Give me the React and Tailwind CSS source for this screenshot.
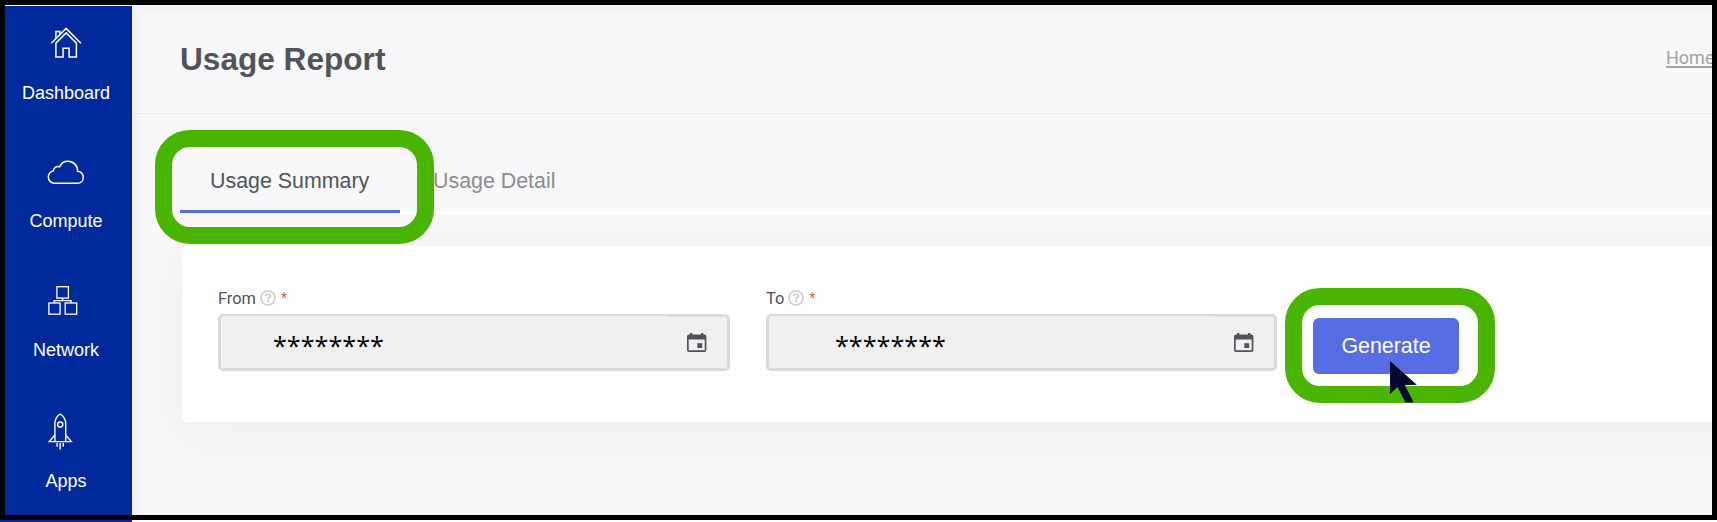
const sans = "font-['Liberation_Sans',Arial,sans-serif]";

function HouseIcon() {
  return (
    <svg width="32" height="32" viewBox="0 0 32 32" fill="none" stroke="white" strokeWidth="1.5">
      <path d="M1.3 16.2 16.1 1.4 30.9 16.2" />
      <path d="M5.9 30.1V16.1L16.1 5.9 26.4 16.1V30.1H19.1V21.2H13.1V30.1Z" />
      <path d="M5.9 11.5V4.4H9.9V7.3" />
    </svg>
  );
}

function CloudIcon() {
  return (
    <svg width="38" height="25" viewBox="0 0 38 25" fill="none" stroke="white" strokeWidth="1.5">
      <path d="M7.6 23.2H30.6C34 23.2 36.3 20.6 36.3 17.4C36.3 13.8 33.6 11.4 30.6 11.3C30.9 5.6 26.4 1.2 21 1.2C16.9 1.2 14 3.6 12.7 6.7C9 5.6 6.6 8 6.4 10.9C3.2 11.9 1.3 14.2 1.3 17C1.3 20.4 4 23.2 7.6 23.2Z" />
    </svg>
  );
}

function NetworkIcon() {
  return (
    <svg width="30" height="30" viewBox="0 0 30 30" fill="none" stroke="white" strokeWidth="1.3">
      <rect x="8.9" y="0.7" width="11.5" height="11.4" />
      <rect x="0.9" y="17" width="11.2" height="11.2" />
      <rect x="17.2" y="17" width="11.5" height="11.2" />
      <path d="M14.6 12.1V14.6M6.1 17V14.6H23.1V17" />
    </svg>
  );
}

function RocketIcon() {
  return (
    <svg width="25" height="38" viewBox="0 0 25 38" fill="none" stroke="white" strokeWidth="1.4">
      <path d="M6.9 28.6V10.5C6.9 6.5 9.2 3 12.2 1C15.2 3 17.7 6.5 17.7 10.5V28.6" />
      <path d="M6.9 22 1.3 28.6H23.3L17.7 22" />
      <circle cx="12.2" cy="11.6" r="2.6" />
      <path d="M9.1 30V33.8M12.2 30V36.6M15.3 30V33.8" />
    </svg>
  );
}

function CalendarIcon() {
  return (
    <svg width="20" height="19" viewBox="0 0 20 19" fill="#505459">
      <path fillRule="evenodd" d="M3 0H5.4V1.5H14V0H16.4V1.5H17.4Q19.4 1.5 19.4 3.5V17Q19.4 19 17.4 19H2Q0 19 0 17V3.5Q0 1.5 2 1.5H3ZM1.7 6.4V17.3H17.7V6.4Z" />
      <path d="M10.3 10.2H15.2V15H10.3Z" />
    </svg>
  );
}

function HelpIcon() {
  return (
    <svg width="16" height="16" viewBox="0 0 16 16" fill="none" stroke="#d2d2d2">
      <circle cx="8" cy="8" r="7.1" strokeWidth="1.8" />
      <path d="M5.6 6.4C5.7 4.8 6.8 4.2 8 4.2C9.4 4.2 10.4 5 10.4 6.1C10.4 7.6 8.1 7.6 8.1 9.2" strokeWidth="2.1" />
      <path d="M8.1 10.4V12.6" strokeWidth="2.3" />
    </svg>
  );
}

function NavItem({ icon, label, className }) {
  return (
    <div className={"flex flex-col items-center pr-[5px] " + className}>
      {icon}
      <span className="text-[18px] leading-[20px] text-white">{label}</span>
    </div>
  );
}

function DateField({ label, className, valueClass }) {
  return (
    <div className={className}>
      <div className="flex h-[20px] items-center font-[Roboto,sans-serif] text-[16.4px] leading-[20px] text-[#505459]">
        <span className="pt-[1px]">{label}</span>
        <span className="ml-[4px]"><HelpIcon /></span>
        <span className="ml-[5px] pb-[1px] text-[14px] text-[#e2564f]">*</span>
      </div>
      <div className="relative mt-[6px] flex h-[57px] items-center justify-between rounded-[5px] border-[3px] border-t-2 border-[#d9d9d9] bg-[#f0f0f0] pr-[20px]">
        <span className="absolute -top-px right-0 h-[2px] w-[59px] bg-[#dadada]" />
        <span className={"pt-[5px] font-['Open_Sans',sans-serif] text-[25.2px] leading-[34px] text-black " + valueClass}>********</span>
        <CalendarIcon />
      </div>
    </div>
  );
}

export default function App() {
  return (
    <div className={"relative h-[522px] w-[1717px] overflow-hidden bg-[linear-gradient(90deg,#002a9c_132px,#fcfcfd_132px)] " + sans}>
      <div className="flex h-[520px] border-[5px] border-black bg-[#f8f8fa]">
        <aside className="w-[127px] shrink-0 border-t border-white bg-[#002a9c]">
          <NavItem className="pt-[21px] [&>span]:mt-[24px]" icon={<HouseIcon />} label="Dashboard" />
          <NavItem className="pt-[57px] [&>span]:mt-[26px]" icon={<CloudIcon />} label="Compute" />
          <NavItem className="pt-[55px] [&>svg]:mr-[7px] [&>span]:mt-[24px]" icon={<NetworkIcon />} label="Network" />
          <NavItem className="pt-[53px] [&>svg]:mr-[11px] [&>span]:mt-[20px]" icon={<RocketIcon />} label="Apps" />
        </aside>
        <main className="flex min-w-0 flex-1 flex-col overflow-hidden border-t border-white shadow-[inset_6px_4px_10px_rgba(60,60,110,0.035)]">
          <header className="flex h-[108px] shrink-0 items-start justify-between border-b border-[#e9eaec] pl-[48px]">
            <h1 className="mt-[34px] text-[31.6px] leading-[38px] font-bold text-[#505459]">Usage Report</h1>
            <a className="mt-[42px] h-[20px] w-[46px] shrink-0 whitespace-nowrap border-b-2 border-[#a2a2a4] font-[Roboto,sans-serif] text-[18px] leading-[20px] text-[#a2a2a4]">Home</a>
          </header>
          <nav className="ml-[48px] mt-[47px] flex h-[53px] shrink-0 text-[21.4px] leading-[40px]">
            <div className="h-[52px] w-[220px] border-b-[3px] border-[#566de4] pl-[30px] text-[#505459]">Usage Summary</div>
            <div className="flex-1 border-b-[3px] border-white pl-[33px] text-[#8c8c8e]">Usage Detail</div>
          </nav>
          <section className="ml-[50px] mt-[32px] -mr-[90px] flex h-[176px] shrink-0 items-start rounded-[4px] bg-white pl-[36px] pt-[42px] shadow-[0_12px_50px_rgba(40,40,50,0.055)]">
            <DateField className="w-[512px]" valueClass="ml-[52px]" label="From" />
            <DateField className="ml-[36px] w-[511px]" valueClass="ml-[66px]" label="To" />
            <button className="ml-[36px] mt-[30px] h-[56px] w-[146px] rounded-[6px] bg-[#566de4] text-[21.4px] text-white">Generate</button>
          </section>
        </main>
      </div>
      <div className="absolute left-[154.5px] top-[129.5px] h-[114px] w-[279px] rounded-[35px] border-[17px] border-[#4ab500]" />
      <div className="absolute left-[1285px] top-[288px] h-[114.5px] w-[209.5px] rounded-[35px] border-[17px] border-[#4ab500]" />
      <svg className="absolute left-[1389px] top-[360px]" width="30" height="43" viewBox="0 0 30 43" fill="#040930">
        <path d="M1 1V34L8.5 27L16.5 42.4H24.8L15.8 25.2L27.8 24.7Z" />
      </svg>
    </div>
  );
}
